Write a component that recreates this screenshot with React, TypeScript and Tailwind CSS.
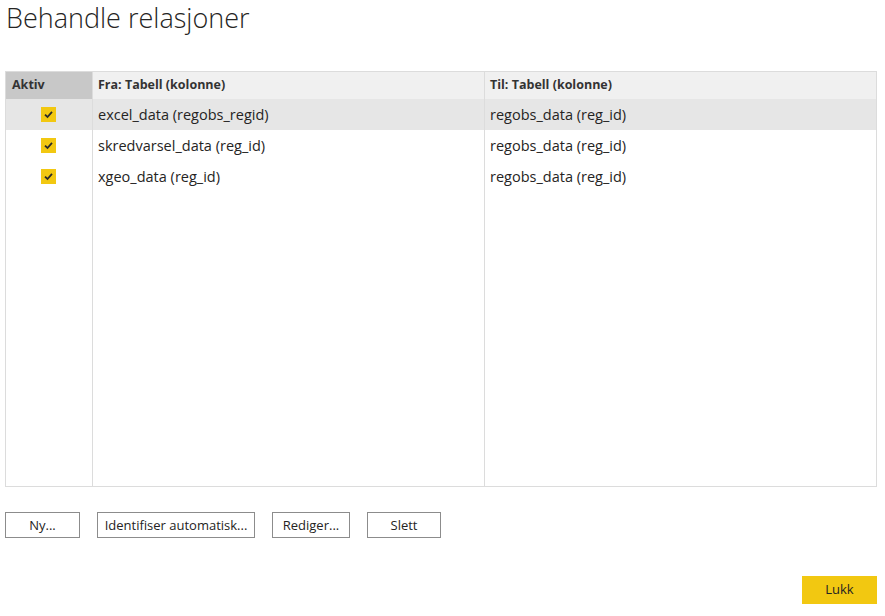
import React from "react";

const rows = [
  { from: "excel_data (regobs_regid)", to: "regobs_data (reg_id)", selected: true },
  { from: "skredvarsel_data (reg_id)", to: "regobs_data (reg_id)", selected: false },
  { from: "xgeo_data (reg_id)", to: "regobs_data (reg_id)", selected: false },
];

function Check() {
  return (
    <span className="flex h-[15px] w-[15px] items-center justify-center bg-[#f2c811]">
      <svg width="11" height="11" viewBox="0 0 11 11">
        <path d="M2 5.6 L4.5 8 L9 2.8" fill="none" stroke="#2b2b2b" strokeWidth="1.8" />
      </svg>
    </span>
  );
}

function Btn({ label, w }: { label: string; w: string }) {
  return (
    <button
      type="button"
      className={`h-[26px] ${w} border border-[#8c8c8c] bg-white pt-[2px] text-[13px] text-[#252423]`}
    >
      {label}
    </button>
  );
}

export default function App() {
  return (
    <div
      className="h-[616px] w-[885px] bg-white text-[#252423]"
      style={{ fontFamily: '"Open Sans", "Noto Sans", sans-serif' }}
    >
      <h1 className="pl-[6px] text-[27px] font-light leading-[35px] text-[#252423]">
        Behandle relasjoner
      </h1>
      <div className="mx-[5px] mt-[36px] flex h-[416px] w-[872px] border border-[#dcdcdc]">
        <div className="flex w-[87px] flex-col border-r border-[#dcdcdc]">
          <div className="flex h-[27px] items-center bg-[#c8c8c8] pl-[6px] text-[12.5px] font-bold text-[#333333]">
            Aktiv
          </div>
          {rows.map((r, i) => (
            <div
              key={i}
              className={`flex h-[31px] items-center justify-center pr-[1px] ${r.selected ? "bg-[#e6e6e6]" : ""}`}
            >
              <Check />
            </div>
          ))}
        </div>
        <div className="flex w-[392px] flex-col border-r border-[#dcdcdc]">
          <div className="flex h-[27px] items-center bg-[#f0f0f0] pl-[5px] text-[12.5px] font-bold text-[#333333]">
            Fra: Tabell (kolonne)
          </div>
          {rows.map((r, i) => (
            <div
              key={i}
              className={`flex h-[31px] items-center pl-[5px] text-[14.5px] ${r.selected ? "bg-[#e6e6e6]" : ""}`}
            >
              {r.from}
            </div>
          ))}
        </div>
        <div className="flex flex-1 flex-col">
          <div className="flex h-[27px] items-center bg-[#f0f0f0] pl-[5px] text-[12.5px] font-bold text-[#333333]">
            Til: Tabell (kolonne)
          </div>
          {rows.map((r, i) => (
            <div
              key={i}
              className={`flex h-[31px] items-center pl-[5px] text-[14.5px] ${r.selected ? "bg-[#e6e6e6]" : ""}`}
            >
              {r.to}
            </div>
          ))}
        </div>
      </div>
      <div className="ml-[5px] mt-[25px] flex gap-[17px]">
        <Btn label="Ny..." w="w-[75px]" />
        <Btn label="Identifiser automatisk..." w="w-[158px]" />
        <Btn label="Rediger..." w="w-[78px]" />
        <Btn label="Slett" w="w-[74px]" />
      </div>
      <div className="mr-[8px] mt-[38px] flex justify-end">
        <button type="button" className="h-[28px] w-[75px] bg-[#f2c811] text-[13px] text-[#252423]">
          Lukk
        </button>
      </div>
    </div>
  );
}
